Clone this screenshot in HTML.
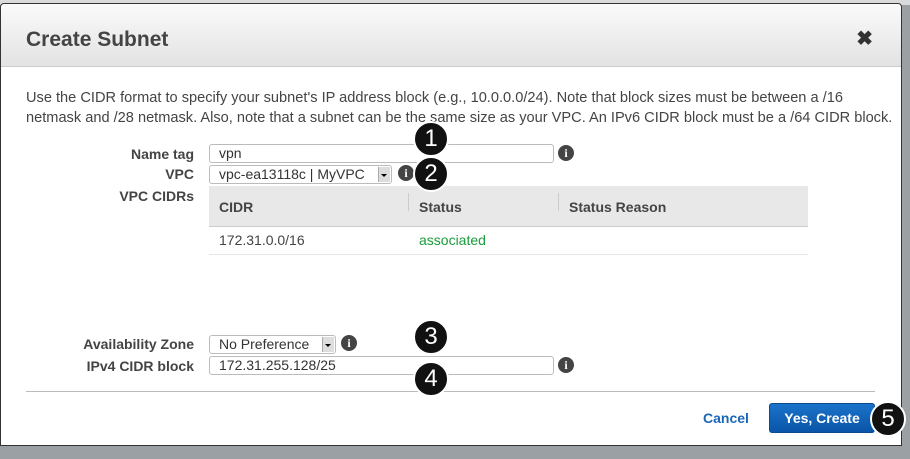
<!DOCTYPE html>
<html><head><style>
body{margin:0;width:910px;height:459px;background:#9ba0a5;position:relative;overflow:hidden;font-family:"Liberation Sans",sans-serif;}
.top{position:absolute;left:0;top:0;width:910px;height:5px;background:#d9dadb;}
.modal{position:absolute;left:0;top:3px;width:902px;height:443px;background:#fff;border:1px solid #333;border-radius:4px 4px 0 0;box-sizing:border-box;}
.hdr{height:62px;background:linear-gradient(#fafafa,#e3e3e3);border-radius:4px 4px 0 0;border-bottom:1px solid #ccc;position:relative;}
.hdr h1{margin:0;position:absolute;left:25px;top:24px;font-size:21px;color:#444;font-weight:bold;}
.x{position:absolute;right:28px;top:22px;font-size:20px;font-weight:bold;color:#333;}
.abs{position:absolute;}
.lbl{position:absolute;font-size:14px;font-weight:bold;color:#444;text-align:right;width:190px;left:3px;}
.inp{position:absolute;border:1px solid #bbb;border-radius:3px;font-size:14px;color:#333;padding-left:9px;box-sizing:border-box;height:19px;line-height:17px;background:#fff;}
.info{position:absolute;width:16px;height:16px;border-radius:50%;background:#444;color:#fff;font:bold 12px "Liberation Serif",serif;text-align:center;line-height:16px;}
.num{position:absolute;width:32px;height:32px;border-radius:50%;background:#111;border:2px solid #fff;color:#fff;font-size:24px;text-align:center;line-height:32px;box-sizing:content-box;}
.sel::after{content:"";position:absolute;right:1px;top:1px;width:11px;height:15px;background:#ddd;border-left:1px solid #aaa;}
.sel::before{content:"";position:absolute;right:4px;top:8px;border:3px solid transparent;border-top:3px solid #000;z-index:2;}
</style></head><body>
<div class="top"></div>
<div class="modal">
<div class="hdr"><h1>Create Subnet</h1><div class="x">✖</div></div>
<div class="abs" style="left:25px;top:84px;width:875px;white-space:nowrap;font-size:14.6px;line-height:20px;color:#444;">Use the CIDR format to specify your subnet's IP address block (e.g., 10.0.0.0/24). Note that block sizes must be between a /16<br>netmask and /28 netmask. Also, note that a subnet can be the same size as your VPC. An IPv6 CIDR block must be a /64 CIDR block.</div>
<div class="lbl" style="top:142px">Name tag</div>
<div class="inp" style="left:208px;top:140px;width:345px;">vpn</div>
<div class="info" style="left:557px;top:141px">i</div>
<div class="lbl" style="top:162px">VPC</div>
<div class="inp sel" style="left:208px;top:161px;width:183px;">vpc-ea13118c | MyVPC</div>
<div class="info" style="left:397px;top:161px">i</div>
<div class="lbl" style="top:184px">VPC CIDRs</div>
<div class="abs" style="left:208px;top:182px;width:599px;height:40px;background:#e8e8e8;border-bottom:1px solid #ccc;font-size:14px;font-weight:bold;color:#444;">
<span class="abs" style="left:10px;top:13px">CIDR</span><span class="abs" style="left:199px;top:7px;height:18px;border-left:1px solid #ccc"></span>
<span class="abs" style="left:210px;top:13px">Status</span><span class="abs" style="left:349px;top:7px;height:18px;border-left:1px solid #ccc"></span>
<span class="abs" style="left:360px;top:13px">Status Reason</span></div>
<div class="abs" style="left:208px;top:223px;width:599px;height:27px;border-bottom:1px solid #e5e5e5;font-size:14px;">
<span class="abs" style="left:10px;top:5px;color:#444">172.31.0.0/16</span><span class="abs" style="left:210px;top:5px;color:#1a9c3a">associated</span></div>
<div class="lbl" style="top:332px">Availability Zone</div>
<div class="inp sel" style="left:208px;top:331px;width:127px;">No Preference</div>
<div class="info" style="left:340px;top:331px">i</div>
<div class="lbl" style="top:354px">IPv4 CIDR block</div>
<div class="inp" style="left:208px;top:352px;width:345px;">172.31.255.128/25</div>
<div class="info" style="left:557px;top:353px">i</div>
<div class="abs" style="left:25px;top:387px;width:849px;border-top:1px solid #bbb"></div>
<div class="abs" style="left:702px;top:406px;font-size:14px;font-weight:bold;color:#1a66b8">Cancel</div>
<div class="abs" style="left:768px;top:399px;width:106px;height:30px;border-radius:3px;background:linear-gradient(#1a73c9,#0a55a8);border:1px solid #0b4a91;box-sizing:border-box;color:#fff;font-size:14px;font-weight:bold;text-align:center;line-height:28px;">Yes, Create</div>
</div>
<div class="num" style="left:413px;top:121px">1</div>
<div class="num" style="left:413px;top:156px">2</div>
<div class="num" style="left:413px;top:319px">3</div>
<div class="num" style="left:413px;top:361px">4</div>
<div class="num" style="left:870px;top:401px">5</div>
</body></html>
